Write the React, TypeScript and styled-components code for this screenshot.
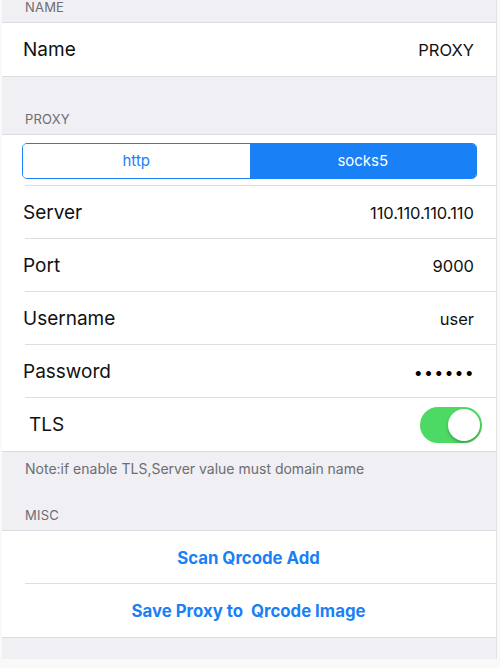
import React from "react";
import styled, { createGlobalStyle } from "styled-components";

const Global = createGlobalStyle`
  html, body { margin: 0; padding: 0; background: #f7f7f7; }
  body { font-family: Inter, "Noto Sans", sans-serif; -webkit-font-smoothing: antialiased; }
`;

const Frame = styled.div`
  width: 500px;
  height: 668px;
  box-sizing: border-box;
  padding: 0 3px 9px 2px;
  background: #f9f9f9;
  overflow: hidden;
`;

const Screen = styled.div`
  background: #efeff4;
  display: flex;
  flex-direction: column;
  margin-top: -8px;
  padding-bottom: 21px;
  border-right: 1px solid #e4e4e8;
`;

const SectionHeader = styled.div<{ $h: number }>`
  height: ${(p) => p.$h}px;
  box-sizing: border-box;
  display: flex;
  align-items: flex-end;
  padding: 0 0 7px 23px;
  font-size: 13px;
  color: #6d6d72;
  letter-spacing: 0.2px;
`;

const Footer = styled.div`
  padding: 8px 0 0 23px;
  height: 36px;
  box-sizing: border-box;
  font-size: 14px;
  color: #6d6d72;
`;

const Group = styled.div`
  background: #fff;
  border-top: 1px solid #dcdce0;
  border-bottom: 1px solid #dcdce0;
  display: flex;
  flex-direction: column;
`;

const Row = styled.div<{ $sep?: boolean }>`
  height: 53px;
  display: flex;
  align-items: center;
  justify-content: space-between;
  padding: 0 22px 0 21px;
  position: relative;
  ${(p) =>
    p.$sep
      ? `&::after { content: ""; position: absolute; left: 23px; right: 0; bottom: 0; height: 1px; background: #dededf; }`
      : ""}
`;

const Label = styled.span<{ $indent?: number }>`
  font-size: 19px;
  color: #111;
  padding-left: ${(p) => p.$indent ?? 0}px;
`;

const Value = styled.span`
  font-size: 16.5px;
  color: #111;
`;

const Dots = styled.span`
  font-size: 16px;
  letter-spacing: 1.2px;
  margin-right: -1px;
  color: #000;
`;

const SegRow = styled.div`
  height: 51px;
  display: flex;
  align-items: center;
  padding: 0 19px 0 20px;
  position: relative;
  &::after { content: ""; position: absolute; left: 23px; right: 0; bottom: 0; height: 1px; background: #dededf; }
`;

const Segmented = styled.div`
  flex: 1;
  height: 34px;
  display: grid;
  grid-template-columns: 1fr 1fr;
  border: 1.5px solid #1a80f6;
  border-radius: 5px;
  overflow: hidden;
`;

const Segment = styled.div<{ $active?: boolean }>`
  display: flex;
  align-items: center;
  justify-content: center;
  font-size: 15px;
  background: ${(p) => (p.$active ? "#1a80f6" : "#fff")};
  color: ${(p) => (p.$active ? "#fff" : "#1a80f6")};
`;

const Switch = styled.div`
  width: 62px;
  height: 36px;
  border-radius: 18px;
  background: #4cd964;
  position: relative;
  margin-right: -8px;
`;

const Knob = styled.div`
  position: absolute;
  right: 2px;
  top: 2px;
  width: 32px;
  height: 32px;
  border-radius: 50%;
  background: #fff;
  box-shadow: 0 2px 3px rgba(0, 0, 0, 0.25);
`;

const ActionRow = styled(Row)`
  justify-content: center;
  font-size: 16.8px;
  font-weight: 700;
  color: #1a80f6;
  white-space: pre;
`;

export default function App() {
  return (
    <>
      <Global />
      <Frame>
        <Screen>
          <SectionHeader $h={30}>NAME</SectionHeader>
          <Group>
            <Row>
              <Label>Name</Label>
              <Value>PROXY</Value>
            </Row>
          </Group>
          <SectionHeader $h={57}>PROXY</SectionHeader>
          <Group>
            <SegRow>
              <Segmented>
                <Segment>http</Segment>
                <Segment $active>socks5</Segment>
              </Segmented>
            </SegRow>
            <Row $sep>
              <Label>Server</Label>
              <Value>110.110.110.110</Value>
            </Row>
            <Row $sep>
              <Label>Port</Label>
              <Value>9000</Value>
            </Row>
            <Row $sep>
              <Label>Username</Label>
              <Value>user</Value>
            </Row>
            <Row $sep>
              <Label>Password</Label>
              <Dots>••••••</Dots>
            </Row>
            <Row>
              <Label $indent={6}>TLS</Label>
              <Switch>
                <Knob />
              </Switch>
            </Row>
          </Group>
          <Footer>Note:if enable TLS,Server value must domain name</Footer>
          <SectionHeader $h={42}>MISC</SectionHeader>
          <Group>
            <ActionRow $sep>Scan Qrcode Add</ActionRow>
            <ActionRow>Save Proxy to  Qrcode Image</ActionRow>
          </Group>
        </Screen>
      </Frame>
    </>
  );
}
